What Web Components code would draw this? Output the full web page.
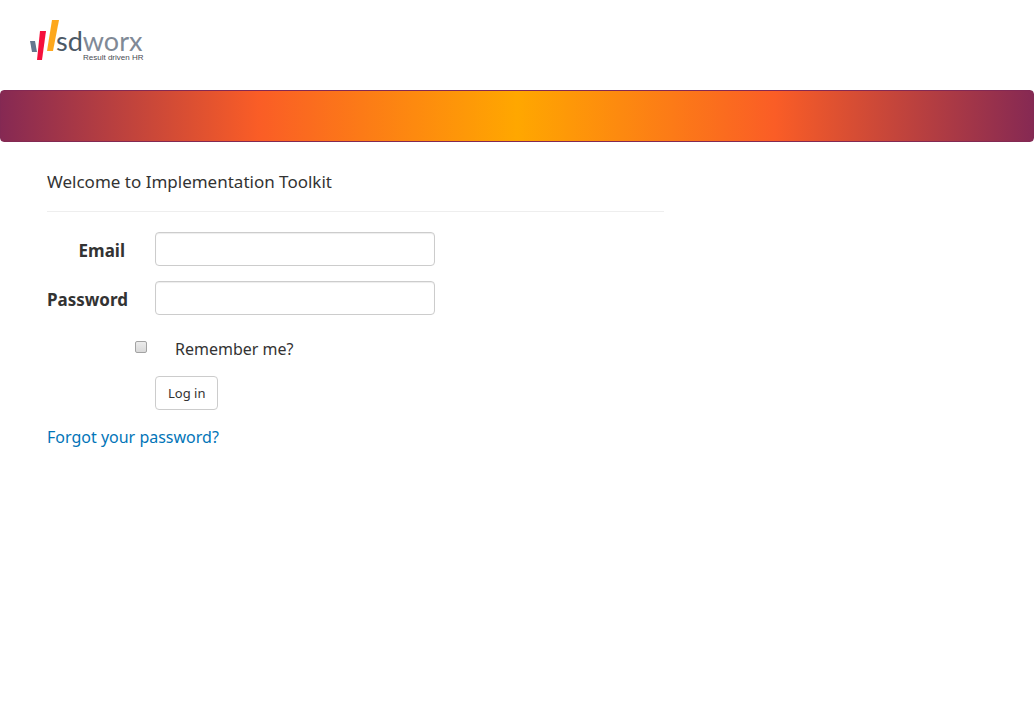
<!DOCTYPE html>
<html lang="en">
<head>
<meta charset="utf-8">
<title>Log in</title>
<style>
body { margin: 0; background: #fff; color: #333; font: 16px/24px "Noto Sans", Tahoma, sans-serif; }
</style>
</head>
<body>
<login-page></login-page>
<script>
const define = (name, html) => customElements.define(name, class extends HTMLElement {
  constructor() {
    super();
    this.attachShadow({ mode: "open" }).innerHTML = html;
  }
});

define("brand-logo", `
<style>
  :host { display: block; width: 120px; height: 44px; }
  svg { display: block; }
</style>
<svg width="120" height="44" viewBox="0 0 120 44" role="img" aria-label="sdworx, Result driven HR">
  <path d="M0 21h5l2 11H2z" fill="#66788f"/>
  <path d="M10 11h6l-4 29H7z" fill="#f5103c"/>
  <path d="M22 0h7l-6 31h-6z" fill="#fda71c"/>
  <text x="26" y="31" font-family="Lato, sans-serif" font-size="27" fill="#4c5966">sd<tspan fill="#808996">worx</tspan></text>
  <text x="53" y="40" font-family="Liberation Sans, sans-serif" font-size="8" fill="#484c54">Result driven HR</text>
</svg>`);

define("brand-bar", `
<style>
  :host {
    display: block; box-sizing: border-box; height: 52px;
    border: 1px solid #832953; border-radius: 4px;
    background: linear-gradient(to right, #862953, #fa5d26 25%, #ffa700 50%, #fa5d26 75%, #862953);
  }
</style>`);

customElements.define("text-field", class extends HTMLElement {
  constructor() {
    super();
    this.attachShadow({ mode: "open" }).innerHTML = `
<style>
  :host { display: grid; grid-template-columns: 82px 280px; column-gap: 26px; align-items: center; height: 34px; }
  label { font-size: 17px; font-weight: 700; padding-top: 4px; white-space: nowrap; }
  :host([align-label="end"]) label { text-align: right; padding-right: 4px; }
  input {
    box-sizing: border-box; width: 100%; height: 34px; padding: 6px 12px;
    border: 1px solid #ccc; border-radius: 4px; background: #fff; color: #555;
    font: 14px/20px "Noto Sans", sans-serif; box-shadow: inset 0 1px 1px rgba(0,0,0,.075); outline: none;
  }
  input:focus { border-color: #66afe9; }
</style>
<label for="field"><slot></slot></label><input id="field">`;
    this.shadowRoot.querySelector("input").type = this.getAttribute("type") || "text";
  }
});

define("check-field", `
<style>
  :host { display: flex; align-items: center; gap: 28px; padding-left: 88px; }
  input {
    appearance: none; box-sizing: border-box; width: 12px; height: 12px; margin: 0 0 4px;
    border: 1px solid #a3a3a3; border-radius: 2px; background: linear-gradient(#ececec, #d9d9d9);
  }
  input:checked { background: #555; }
</style>
<input type="checkbox" id="check"><label for="check"><slot></slot></label>`);

define("push-button", `
<style>
  :host { display: block; }
  button {
    display: block; height: 34px; padding: 6px 12px; box-sizing: border-box;
    border: 1px solid #ccc; border-radius: 4px; background: #fff; color: #333;
    font: 13px/20px "Noto Sans", sans-serif; cursor: pointer;
  }
</style>
<button type="submit"><slot></slot></button>`);

define("login-form", `
<style>
  :host { display: block; }
  h1 { margin: 0; padding-bottom: 17px; border-bottom: 1px solid #eee; font-size: 17px; line-height: 24px; font-weight: 400; }
  form { display: grid; gap: 15px; padding-top: 20px; }
  push-button { padding-left: 108px; }
  check-field { padding-top: 7px; }
  a { color: #0275b8; text-decoration: none; justify-self: start; }
</style>
<h1>Welcome to Implementation Toolkit</h1>
<form>
  <text-field type="email" align-label="end">Email</text-field>
  <text-field type="password">Password</text-field>
  <check-field>Remember me?</check-field>
  <push-button>Log in</push-button>
  <a href="#">Forgot your password?</a>
</form>`);

define("login-page", `
<style>
  :host { display: block; }
  header { padding: 20px 30px 26px; }
  main { box-sizing: border-box; max-width: 970px; margin: 0 auto; padding: 28px 15px; }
  login-form { width: calc((100% + 30px) * 2 / 3 - 30px); }
</style>
<header><brand-logo></brand-logo></header>
<brand-bar></brand-bar>
<main><login-form></login-form></main>`);
</script>
</body>
</html>
